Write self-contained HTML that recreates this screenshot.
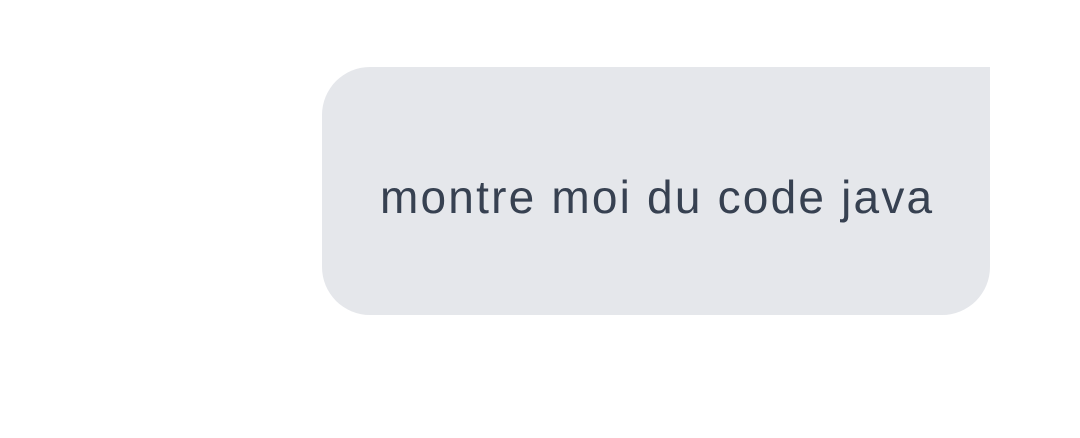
<!DOCTYPE html>
<html><head><meta charset="utf-8"><style>
html,body{margin:0;padding:0;background:#fff;width:1080px;height:438px;overflow:hidden}
.b{position:absolute;left:322px;top:67px;width:668px;height:248px;background:#e5e7eb;border-radius:48px 0 48px 48px;}
.t{position:absolute;left:380px;top:169px;font-family:"Liberation Sans",sans-serif;font-size:46px;letter-spacing:2.2px;color:#374151;white-space:nowrap;line-height:56px}
</style></head><body>
<div class="b"></div>
<div class="t">montre moi du code java</div>
</body></html>
